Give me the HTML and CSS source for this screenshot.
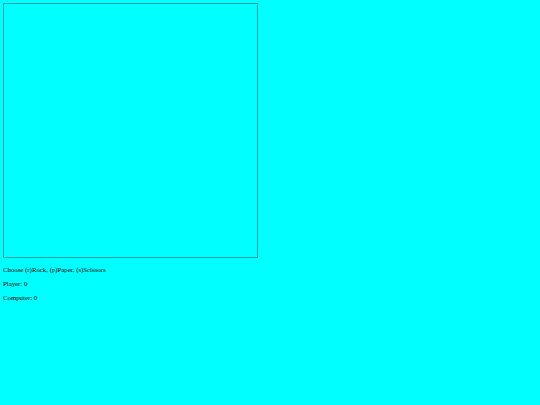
FILE: index.html
```html
<!DOCTYPE html>
<html lang="en">
<head>
    <meta charset="UTF-8">
    <meta name="viewport" content="width=device-width, initial-scale=1.0">
    <title>Rock Paper Scissors</title>
    <link rel="stylesheet" href="styles.css">
</head>
<body>
    <div class="board"></div>
    <p class="prompt">Choose (r)Rock, (p)Paper, (s)Scissors</p>
    <p class="score">Player: 0</p>
    <p class="score">Computer: 0</p>
</body>
</html>
```
FILE: styles.css
```css
body {
    margin: 3px;
    background: #00ffff;
    font-family: "Liberation Serif", "Times New Roman", serif;
    font-size: 6.8px;
    color: #000;
}

.board {
    width: 253px;
    height: 253px;
    border: 1px solid #1f9f9f;
}

p {
    margin: 7px 0;
}

.prompt {
    margin-top: 8px;
}
```
